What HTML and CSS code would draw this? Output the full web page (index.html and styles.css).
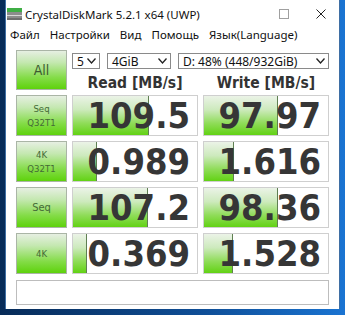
FILE: index.html
```html
<!DOCTYPE html>
<html lang="ru">
<head>
    <meta charset="UTF-8">
    <title>CrystalDiskMark 5.2.1 x64 (UWP)</title>
    <link rel="stylesheet" href="styles.css">
</head>
<body>
    <div class="window">
        <!-- Title bar -->
        <div class="titlebar">
            <svg class="app-icon" width="15" height="12" viewBox="0 0 15 12">
                <rect x="0" y="0" width="15" height="4" fill="#3fae45"/>
                <rect x="0" y="4" width="15" height="8" fill="#8c8c8c"/>
                <rect x="0" y="7" width="15" height="1" fill="#d8d8d8"/>
                <rect x="0" y="10" width="15" height="2" fill="#6e6e6e"/>
            </svg>
            <span class="title">CrystalDiskMark 5.2.1 x64 (UWP)</span>
            <span class="ctl-max"></span>
            <svg class="ctl-close" width="10" height="10" viewBox="0 0 10 10">
                <path d="M0.5 0.5 L9.5 9.5 M9.5 0.5 L0.5 9.5" stroke="#222" stroke-width="1"/>
            </svg>
        </div>

        <!-- Menu -->
        <div class="menubar">
            <span>Файл</span>
            <span>Настройки</span>
            <span>Вид</span>
            <span>Помощь</span>
            <span>Язык(Language)</span>
        </div>

        <div class="main">
            <div class="grid">
                <div class="btn btn-all">All</div>
                <div class="top">
                    <div class="selects">
                        <div class="select sel-count">5<svg class="chev" width="9" height="6" viewBox="0 0 9 6"><path d="M0.5 0.5 L4.5 5 L8.5 0.5" fill="none" stroke="#222" stroke-width="1.3"/></svg></div>
                        <div class="select sel-size">4GiB<svg class="chev" width="9" height="6" viewBox="0 0 9 6"><path d="M0.5 0.5 L4.5 5 L8.5 0.5" fill="none" stroke="#222" stroke-width="1.3"/></svg></div>
                        <div class="select sel-drive">D: 48% (448/932GiB)<svg class="chev" width="9" height="6" viewBox="0 0 9 6"><path d="M0.5 0.5 L4.5 5 L8.5 0.5" fill="none" stroke="#222" stroke-width="1.3"/></svg></div>
                    </div>
                    <div class="heads">
                        <div>Read [MB/s]</div>
                        <div>Write [MB/s]</div>
                    </div>
                </div>

                <!-- Seq Q32T1 -->
                <div class="btn btn-label"><span>Seq</span><span>Q32T1</span></div>
                <div class="cell" style="--w:76px"><span class="val">109.5</span></div>
                <div class="cell" style="--w:74px"><span class="val">97.97</span></div>

                <!-- 4K Q32T1 -->
                <div class="btn btn-label"><span>4K</span><span>Q32T1</span></div>
                <div class="cell" style="--w:24px"><span class="val">0.989</span></div>
                <div class="cell" style="--w:30px"><span class="val">1.616</span></div>

                <!-- Seq -->
                <div class="btn btn-label btn-big"><span>Seq</span></div>
                <div class="cell" style="--w:75px"><span class="val">107.2</span></div>
                <div class="cell" style="--w:74px"><span class="val">98.36</span></div>

                <!-- 4K -->
                <div class="btn btn-label"><span>4K</span></div>
                <div class="cell" style="--w:14px"><span class="val">0.369</span></div>
                <div class="cell" style="--w:29px"><span class="val">1.528</span></div>
            </div>
            <div class="comment"></div>
        </div>
    </div>
</body>
</html>
```

FILE: styles.css
```css
* {
    margin: 0;
    padding: 0;
    box-sizing: border-box;
}

body {
    width: 345px;
    height: 315px;
    overflow: hidden;
    background: linear-gradient(90deg, #072b58 0%, #0f4f98 60%, #1a74d2 100%);
    font-family: 'Noto Sans', sans-serif;
    color: #222;
}

.window {
    margin-left: 5px;
    width: 335px;
    height: 309px;
    background: #fff;
    border-left: 1px solid #3f6fa4;
    border-right: 1px solid #3f6fa4;
}

/* Title bar */
.titlebar {
    height: 24px;
    display: flex;
    align-items: center;
    padding-left: 1px;
    padding-top: 4px;
}

.app-icon {
    flex: none;
    margin-right: 3px;
}

.title {
    font-size: 11.5px;
    color: #111;
    flex: 1;
}

.ctl-max {
    width: 10px;
    height: 10px;
    border: 1px solid #a0a0a0;
    margin-right: 27px;
}

.ctl-close {
    margin-right: 13px;
}

/* Menu */
.menubar {
    height: 20px;
    display: flex;
    align-items: center;
    gap: 10px;
    padding-left: 4px;
    font-size: 11.5px;
    color: #111;
}

/* Main area */
.main {
    padding: 6px 0 0 10px;
}

.grid {
    display: grid;
    grid-template-columns: 51px 126px 126px;
    grid-template-rows: 40px repeat(4, 41px);
    column-gap: 5px;
    row-gap: 5px;
}

.btn {
    border: 1px solid #aab5a6;
    background: linear-gradient(180deg, #e6efe2 0%, #c4e8b0 30%, #84dc48 70%, #5ed20c 100%);
    display: flex;
    flex-direction: column;
    align-items: center;
    justify-content: center;
    font-family: 'DejaVu Sans Condensed', 'DejaVu Sans', sans-serif;
    color: #446a36;
}

.btn-all {
    font-size: 14px;
    color: #3c5a30;
}

.btn-label {
    font-size: 9.5px;
    line-height: 14px;
}

.btn-big {
    font-size: 11px;
}

.top {
    grid-column: span 2;
    display: flex;
    flex-direction: column;
}

.selects {
    display: flex;
    margin-top: 3px;
    height: 16px;
}

.select {
    height: 16px;
    border: 1px solid #8a8a8a;
    background: #fff;
    display: flex;
    align-items: center;
    justify-content: space-between;
    padding: 0 3px 0 4px;
    font-size: 12px;
    color: #111;
}

.sel-count {
    width: 28px;
}

.sel-size {
    width: 64px;
    margin-left: 7px;
}

.sel-drive {
    width: 151px;
    margin-left: 7px;
}

.chev {
    flex: none;
}

.heads {
    display: grid;
    grid-template-columns: 126px 126px;
    column-gap: 5px;
    margin-top: 5px;
    font-family: 'DejaVu Sans Condensed', 'DejaVu Sans', sans-serif;
    font-weight: bold;
    font-size: 15.5px;
    color: #333;
    text-align: center;
}

.cell {
    border: 1px solid #cfcfcf;
    background:
        linear-gradient(90deg, transparent calc(var(--w) - 1px), #5f7f52 calc(var(--w) - 1px), #5f7f52 var(--w), transparent var(--w)),
        linear-gradient(180deg, #ebf3e7 0%, #cdeabd 35%, #8fdc58 70%, #62d214 100%) no-repeat 0 0 / var(--w) 100%,
        #fff;
    display: flex;
    align-items: center;
    justify-content: flex-end;
    padding-right: 7px;
}

.val {
    font-family: 'DejaVu Sans Condensed', 'DejaVu Sans', sans-serif;
    font-weight: bold;
    font-size: 36px;
    line-height: 39px;
    color: #363636;
}

.comment {
    margin-top: 6px;
    width: 313px;
    height: 25px;
    border: 1px solid #bdbdbd;
    background: #fff;
}
```
